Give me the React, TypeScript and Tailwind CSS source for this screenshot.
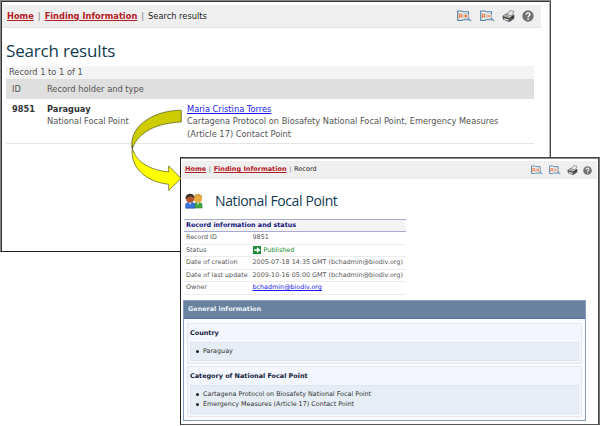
import type { ReactNode } from "react";

function ZoomIcon({ plus }: { plus?: boolean }) {
  return (
    <svg viewBox="0 0 15 12" className="block h-full w-full" fill="none">
      <path d="M0.7 1h4.2l0.8 0.8h5.8v8H5.7l-0.8 0.6H0.7z" fill="#f4fafd" stroke="#55819f" strokeWidth="1.1" />
      <path d="M2.3 8.2V4h2.5v4.2M2.3 6.2h2.5" stroke="#ef7a45" strokeWidth="1.1" />
      <circle cx="8.8" cy="6" r="2.8" fill="#ffeadb" stroke="#a9c3d5" strokeWidth="0.8" />
      <path d="M7.1 6h3.4" stroke="#ef7a45" strokeWidth="1.3" />
      {plus && <path d="M8.8 4.3v3.4" stroke="#ef7a45" strokeWidth="1.3" />}
      <path d="M10.9 8.2l3.2 2.9" stroke="#6f9bb8" strokeWidth="1.4" />
    </svg>
  );
}

function PrinterIcon() {
  return (
    <svg viewBox="0 0 13 12" className="block h-full w-full">
      <path d="M0.4 6L4.6 3.2l7.8 1.9-.2 3.7-5 3.1L1 9.6z" fill="#505050" />
      <path d="M1 6L4.8 3.9l6.4 1.6-4.1 2.4z" fill="#c6c6c6" />
      <path d="M5 4.6L7.8.5l4.2 1-2.2 4.4z" fill="#e6e6e6" stroke="#777" strokeWidth="0.7" />
      <path d="M2 8.2l4.7 1.2v1.4L2 9.6z" fill="#dedede" />
      <path d="M3.6 6h1.6" stroke="#58ad4c" strokeWidth="1.4" />
      <path d="M5.8 6.7h1" stroke="#d05555" strokeWidth="1" />
      <path d="M9 7.8l2.4-1.3" stroke="#222" strokeWidth="1.1" />
    </svg>
  );
}

function HelpIcon() {
  return (
    <svg viewBox="0 0 12 12" className="block h-full w-full" fill="none">
      <circle cx="6" cy="6" r="5.7" fill="#717171" />
      <path d="M4.1 4.6C4.2 2.2 8 2.4 7.9 4.5 7.8 5.8 6.1 5.8 6.1 7.3" stroke="#fff" strokeWidth="1.4" />
      <path d="M5.4 8.3h1.4v1.4H5.4z" fill="#fff" />
    </svg>
  );
}

function PeopleIcon() {
  return (
    <svg viewBox="0 0 18 16" className="block h-[16px] w-[18px]">
      <path d="M9 15v-4c1-2 7-2 8 0v4z" fill="#43a93d" stroke="#267a2c" strokeWidth="0.6" />
      <path d="M12 9.6l1 2.2 1.2-2.2z" fill="#fff" />
      <circle cx="13" cy="5.4" r="4.1" fill="#eda83b" />
      <path d="M9 5C8.5-.5 17-.7 17.2 5c-2-2-5-2.4-8.2 0z" fill="#d3a449" />
      <path d="M.7 15.2v-4c1-2.5 8-2.5 9 0v4z" fill="#3775dd" stroke="#1e4eb0" strokeWidth="0.6" />
      <path d="M3.8 9.6l1.3 2.2 1.3-2.2z" fill="#fff" />
      <circle cx="5.1" cy="5.4" r="4.1" fill="#b5562d" />
      <path d="M.6 6.4C-.3-.7 9.6-1 9.5 5.3 6.6 2.7 3.4 3.1.6 6.4z" fill="#383331" />
    </svg>
  );
}

function PublishedIcon() {
  return (
    <svg viewBox="0 0 8 8" className="mr-[3px] block h-[8px] w-[8px]">
      <path d="M0 0h8v8H0z" fill="#23893a" />
      <path d="M1.2 4h5M4 1.7L6.4 4 4 6.3" stroke="#fff" strokeWidth="1.3" fill="none" />
    </svg>
  );
}

function Row({ label, children }: { label: string; children: ReactNode }) {
  return (
    <div className="flex h-[12.6px] items-center border-b border-[#ececec] pl-[2px] text-[#555]">
      <div className="w-[66.5px] shrink-0">{label}</div>
      {children}
    </div>
  );
}

function Section({ title, items }: { title: string; items: string[] }) {
  return (
    <section className="border border-[#e4e9f1] bg-[#f3f6fe] px-[2px] pb-[2px]">
      <h3 className="flex h-[18px] items-center pt-[2px] text-[6.45px] font-bold text-[#122039]">{title}</h3>
      <ul className="border border-[#e0e5ed] bg-[#e6edf4] py-[3.5px] pl-[4px] text-[6.4px] text-[#333]">
        {items.map((item) => (
          <li key={item} className="flex h-[10px] items-center">
            <span className="mr-[4px] ml-px h-[3px] w-[3px] rounded-full bg-[#222]" />
            {item}
          </li>
        ))}
      </ul>
    </section>
  );
}

export default function App() {
  return (
    <main className="relative h-[426px] w-[600px] overflow-hidden bg-white font-['DejaVu_Sans',sans-serif] whitespace-nowrap">
      <div className="absolute top-0 left-0 h-[252px] w-[551px] border border-t-[#888] border-r-[#444] border-b-[#222] border-l-[#888]">
        <div className="h-full border-t border-l border-[#333] border-r border-r-[#bbb] pt-[3px]">
          <header className="mr-[8px] flex h-[23px] items-center border-b border-[#e6e6e6] bg-[#efefef] pr-[7px] pl-[5px] text-[8.27px] text-[#222]">
            <a className="font-bold text-[#b32024] underline">Home</a>
            <span className="mx-[4px] text-[#777]">|</span>
            <a className="font-bold text-[#b32024] underline">Finding Information</a>
            <span className="mx-[4px] text-[#777]">|</span>
            <span>Search results</span>
            <div className="ml-auto flex items-center">
              <span className="mr-[8px] h-[12px] w-[15px]"><ZoomIcon plus /></span>
              <span className="mr-[7px] h-[12px] w-[15px]"><ZoomIcon /></span>
              <span className="mr-[7px] h-[12px] w-[13px]"><PrinterIcon /></span>
              <span className="h-[12px] w-[12px]"><HelpIcon /></span>
            </div>
          </header>
          <h1 className="mt-[11px] ml-[4px] h-[27px] font-['Open_Sans',sans-serif] text-[17px] leading-[24px] tracking-[-0.18px] text-[#123a50]">Search results</h1>
          <div className="mr-[15px] ml-[4px] text-[8.27px] text-[#555]">
            <div className="flex h-[13px] items-center bg-[#f4f4f4] pl-[3px]">Record 1 to 1 of 1</div>
            <div className="flex h-[20px] items-center bg-[#dfdfdf] pl-[6px]">
              <span className="w-[35px]">ID</span>
              <span>Record holder and type</span>
            </div>
            <div className="flex h-[45px] border-b border-[#e5e5e5] pt-[4px] pl-[6px] leading-[12.4px]">
              <b className="w-[35px] text-[#333]">9851</b>
              <div className="w-[140px]">
                <b className="block text-[#333]">Paraguay</b>
                National Focal Point
              </div>
              <div>
                <a className="text-[#1a1af0] underline">Maria Cristina Torres</a>
                <p>Cartagena Protocol on Biosafety National Focal Point, Emergency Measures</p>
                <p>(Article 17) Contact Point</p>
              </div>
            </div>
          </div>
        </div>
      </div>

      <div className="absolute top-[157px] left-[180px] h-[268px] w-[420px] border border-t-[#444] border-r-[#777] border-b-[#555] border-l-[#222] bg-white">
        <div className="h-full border-t border-r border-t-[#888] border-r-[#444] pt-[2px]">
          <header className="mr-px ml-px flex h-[18px] items-center bg-[#efefef] pr-[5px] pl-[3px] text-[6.5px] text-[#222]">
            <a className="font-bold text-[#b32024] underline">Home</a>
            <span className="mx-[2.7px] text-[#777]">|</span>
            <a className="font-bold text-[#b32024] underline">Finding Information</a>
            <span className="mx-[2.7px] text-[#777]">|</span>
            <span>Record</span>
            <div className="ml-auto flex items-center">
              <span className="mr-[6px] h-[10px] w-[12px]"><ZoomIcon plus /></span>
              <span className="mr-[6px] h-[10px] w-[12px]"><ZoomIcon /></span>
              <span className="mr-[5px] h-[10px] w-[11px]"><PrinterIcon /></span>
              <span className="h-[9px] w-[9px]"><HelpIcon /></span>
            </div>
          </header>
          <div className="flex h-[40px] items-center pt-[4px] pl-[4px]">
            <PeopleIcon />
            <h2 className="ml-[12px] font-['Open_Sans',sans-serif] text-[14px] leading-[24px] tracking-[-0.38px] text-[#123a50]">National Focal Point</h2>
          </div>
          <div className="ml-[3px] w-[222px] text-[6.4px]">
            <div className="flex h-[13px] items-center border-y border-[#a9abd0] bg-[#f4f4f4] pl-[2px] font-bold text-[#151580]">Record information and status</div>
            <Row label="Record ID">9851</Row>
            <Row label="Status"><PublishedIcon /><span className="text-[#168a22]">Published</span></Row>
            <Row label="Date of creation">2005-07-18 14:35 GMT (bchadmin@biodiv.org)</Row>
            <Row label="Date of last update">2009-10-16 05:00 GMT (bchadmin@biodiv.org)</Row>
            <Row label="Owner"><a className="text-[#1a1af0] underline">bchadmin@biodiv.org</a></Row>
          </div>
          <div className="mt-[5px] mr-[12px] ml-[2px] h-[121px] border border-[#879dbf] bg-[#f9fbff]">
            <h3 className="flex h-[18px] items-center border-b border-[#58759a] bg-[#68829f] pt-px pl-[4px] text-[6.45px] font-bold text-[#eef4fa]">General information</h3>
            <div className="flex flex-col gap-[2px] px-[3px] pt-[4px]">
              <Section title="Country" items={["Paraguay"]} />
              <Section title="Category of National Focal Point" items={["Cartagena Protocol on Biosafety National Focal Point", "Emergency Measures (Article 17) Contact Point"]} />
            </div>
          </div>
        </div>
      </div>

      <svg viewBox="0 0 60 90" className="absolute top-[105px] left-[125px] h-[90px] w-[60px]" stroke="#55551f" strokeWidth="0.7">
        <path d="M56.3 5.2V17C32 18 13 27 7.4 43.5 3 24 25 5.5 56.3 5.2z" fill="#cccc00" />
        <path d="M7.4 43.5C11 57 25 65 43.7 67V61L56 73.5 43.7 85.5V79.3C23 77 7 65 7.2 47V40z" fill="#ffff00" />
      </svg>
    </main>
  );
}
